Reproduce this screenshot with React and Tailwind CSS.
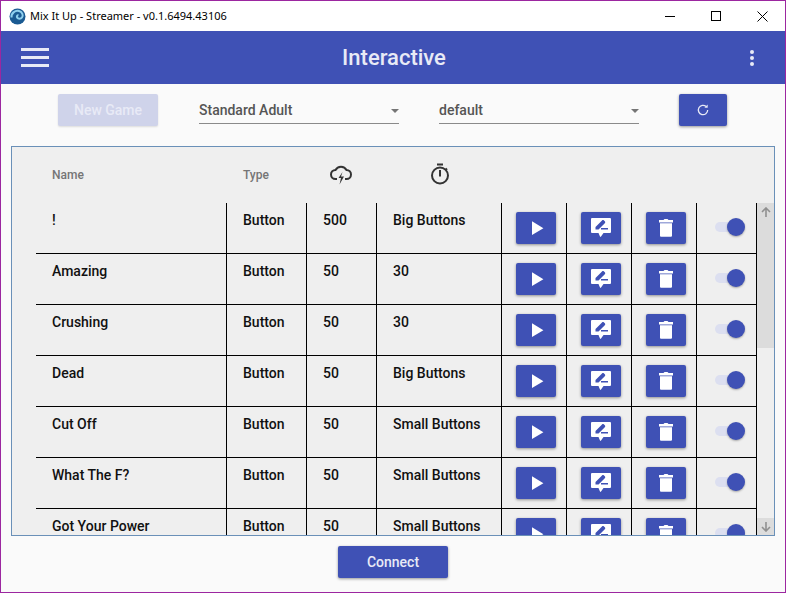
import React from "react";

const rows = [
  ["!", "500", "Big Buttons"],
  ["Amazing", "50", "30"],
  ["Crushing", "50", "30"],
  ["Dead", "50", "Big Buttons"],
  ["Cut Off", "50", "Small Buttons"],
  ["What The F?", "50", "Small Buttons"],
  ["Got Your Power", "50", "Small Buttons"],
];

const PlayIcon = () => (
  <svg width="24" height="24" viewBox="0 0 24 24" fill="white"><path d="M8 5.300v13.700l11.400-6.850z" /></svg>
);
const EditIcon = () => (
  <svg width="24" height="24" viewBox="0 0 24 24">
    <path fill="white" d="M3 2h18a1 1 0 0 1 1 1v13a1 1 0 0 1-1 1h-6.500l-2.500 3.500a.6.6 0 0 1-1 0L9.500 17H3a1 1 0 0 1-1-1V3a1 1 0 0 1 1-1z" />
    <path fill="#3f51b5" d="M6.500 13.500v-2.500l6.500-6.500c.6-.6 1.400-.6 2 0l.8.8c.6.6.6 1.400 0 2l-6.300 6.200zM12 12h7v1.600h-7z" />
  </svg>
);
const TrashIcon = () => (
  <svg width="24" height="24" viewBox="0 0 24 24" fill="white"><path d="M6 7.300h12v12.400a1 1 0 0 1-1 1H7a1 1 0 0 1-1-1zM5 4h4.500l1-1h3l1 1H19v2.500H5z" /></svg>
);

const Btn = ({ children }) => (
  <div className="w-[65px] h-[50px] shrink-0 border-r border-black flex pl-[14px] pt-[9px]">
    <div className="w-[40px] h-[32px] rounded-[2px] bg-[#3f51b5] shadow-[0_1px_3px_rgba(0,0,0,0.4)] flex items-center justify-center">{children}</div>
  </div>
);

const Row = ({ r }) => (
  <div className="h-[51px] flex border-b border-black shrink-0 text-[14px] font-medium text-[#111] leading-[16px]">
    <div className="w-[191px] shrink-0 h-[50px] border-r border-black pl-[16px] pt-[9px]">{r[0]}</div>
    <div className="w-[80px] shrink-0 h-[50px] border-r border-black pl-[16px] pt-[9px]">Button</div>
    <div className="w-[70px] shrink-0 h-[50px] border-r border-black pl-[16px] pt-[9px]">{r[1]}</div>
    <div className="w-[125px] shrink-0 h-[50px] border-r border-black pl-[16px] pt-[9px]">{r[2]}</div>
    <Btn><PlayIcon /></Btn>
    <Btn><EditIcon /></Btn>
    <Btn><TrashIcon /></Btn>
    <div className="flex-1 h-[50px] border-r border-black flex pl-[18px] pt-[15px]">
      <div className="w-[31px] h-[18px] flex items-center relative">
        <div className="w-[25px] h-[10px] rounded-full bg-[#dcdff0]" />
        <div className="absolute left-[12px] top-0 w-[18px] h-[18px] rounded-full bg-[#3f51b5] shadow-[0_1px_2px_rgba(0,0,0,0.3)]" />
      </div>
    </div>
  </div>
);

export default function App() {
  return (
    <div className="w-[786px] h-[593px] border border-[#9c27a0] bg-[#fafafa] flex flex-col overflow-hidden" style={{ fontFamily: "Roboto, sans-serif" }}>
      <div className="h-[30px] bg-white flex items-center shrink-0">
        <svg className="ml-[8px]" width="17" height="17" viewBox="0 0 17 17">
          <circle cx="8.500" cy="8.500" r="8" fill="#1a5a92" />
          <path d="M2.500 9.500c-.5-4 3.500-7.500 7.500-6.500 3.500 1 4.500 4.500 3 6.500-1.200 1.600-3.800 1.600-4.800.2-.8-1.100 0-2.600 1.300-2.400" fill="none" stroke="#8fd0ee" strokeWidth="2" />
        </svg>
        <span className="ml-[4px] text-[11px] text-black" style={{ fontFamily: "'Noto Sans', sans-serif" }}>Mix It Up - Streamer - v0.1.6494.43106</span>
        <div className="ml-auto flex items-center">
          <div className="w-[46px] h-[30px] flex items-center justify-center"><div className="w-[10px] h-px bg-black" /></div>
          <div className="w-[46px] h-[30px] flex items-center justify-center"><div className="w-[10px] h-[10px] border border-black" /></div>
          <div className="w-[46px] h-[30px] flex items-center justify-center">
            <svg width="11" height="11" viewBox="0 0 11 11"><path d="M.5.500l10 10M10.500.500l-10 10" stroke="black" strokeWidth="1" /></svg>
          </div>
        </div>
      </div>

      <div className="h-[53px] bg-[#3f51b5] flex items-center shrink-0">
        <div className="ml-[20px] w-[28px] flex flex-col gap-[5px]">
          <div className="h-[3px] bg-[#e8eaf6]" />
          <div className="h-[3px] bg-[#e8eaf6]" />
          <div className="h-[3px] bg-[#e8eaf6]" />
        </div>
        <div className="flex-1 text-center text-[22px] font-medium text-[#e8eaf6] pr-[11px]">Interactive</div>
        <div className="mr-[31px] flex flex-col gap-[2px]">
          <div className="w-[4px] h-[4px] rounded-full bg-[#e8eaf6]" />
          <div className="w-[4px] h-[4px] rounded-full bg-[#e8eaf6]" />
          <div className="w-[4px] h-[4px] rounded-full bg-[#e8eaf6]" />
        </div>
      </div>

      <div className="h-[62px] flex items-start pt-[10px] shrink-0">
        <div className="ml-[57px] w-[100px] h-[32px] rounded-[2px] bg-[#cfd3ea] shadow-[0_1px_2px_rgba(0,0,0,0.12)] flex items-center justify-center text-[14px] font-medium text-[#e8eaf6]">New Game</div>
        <div className="ml-[41px] w-[200px] h-[30px] border-b border-[#8a8a8a] flex items-center justify-between text-[14px] font-medium text-[#555] pt-[4px]">
          <span>Standard Adult</span>
          <span className="w-0 h-0 border-x-[4px] border-x-transparent border-t-[4px] border-t-[#757575]" />
        </div>
        <div className="ml-[40px] w-[200px] h-[30px] border-b border-[#8a8a8a] flex items-center justify-between text-[14px] font-medium text-[#555] pt-[4px]">
          <span>default</span>
          <span className="w-0 h-0 border-x-[4px] border-x-transparent border-t-[4px] border-t-[#757575]" />
        </div>
        <div className="ml-[40px] w-[48px] h-[32px] rounded-[2px] bg-[#3f51b5] shadow-[0_1px_3px_rgba(0,0,0,0.4)] flex items-center justify-center">
          <svg width="14" height="14" viewBox="0 0 24 24" fill="none" stroke="#e8eaf6" strokeWidth="2.200"><path d="M20 12a8 8 0 1 1-2.600-5.900" /><path d="M20 2.500v5.500h-5.500z" fill="#e8eaf6" stroke="none" /></svg>
        </div>
      </div>

      <div className="ml-[10px] w-[764px] h-[390px] border border-[#6a90b8] bg-[#efefef] shrink-0 overflow-hidden flex flex-col">
        <div className="h-[56px] shrink-0 flex items-center text-[12px] font-medium text-[#757575]">
          <div className="ml-[40px] w-[191px]">Name</div>
          <div className="w-[87px]">Type</div>
          <svg width="24" height="24" viewBox="0 0 24 24" fill="none" stroke="#333" strokeWidth="2">
            <path d="M7 16H5.500A4.500 4.500 0 0 1 5.500 7A6.200 6.200 0 0 1 16.500 7A4.500 4.500 0 0 1 16.500 16H15" />
            <path d="M12.500 9l-4 6h2.500l-1.500 6.500 4.500-8h-3z" fill="#333" stroke="none" />
          </svg>
          <svg className="ml-[75px]" width="22" height="24" viewBox="0 0 22 24" fill="none" stroke="#333" strokeWidth="2">
            <circle cx="11" cy="12.500" r="8" />
            <path d="M11 7v6.500M8 1.500h6M16.500 5.500l1.500 1.500" />
          </svg>
        </div>
        <div className="flex-1 flex min-h-0 overflow-hidden">
          <div className="w-[24px] shrink-0" />
          <div className="flex-1 flex flex-col min-w-0">
            {rows.map((r) => <Row key={r[0]} r={r} />)}
          </div>
          <div className="w-[17px] shrink-0 relative bg-[#efefef]">
            <div className="h-[145px] bg-[#dcdcdc]" />
            <div className="absolute left-0 top-0 w-full h-[17px] flex items-center justify-center">
              <svg width="10" height="10" viewBox="0 0 10 10" fill="none" stroke="#909090" strokeWidth="1.600"><path d="M1 5l4-4 4 4M5 1v9" /></svg>
            </div>
            <div className="absolute left-0 bottom-0 w-full h-[17px] bg-[#dcdcdc] flex items-center justify-center">
              <svg width="10" height="10" viewBox="0 0 10 10" fill="none" stroke="#909090" strokeWidth="1.600"><path d="M1 5l4 4 4-4M5 9V0" /></svg>
            </div>
          </div>
        </div>
      </div>

      <div className="flex-1 flex justify-center pt-[10px]">
        <div className="w-[110px] h-[32px] rounded-[2px] bg-[#3f51b5] shadow-[0_1px_3px_rgba(0,0,0,0.4)] flex items-center justify-center text-[14px] font-medium text-[#e8eaf6]">Connect</div>
      </div>
    </div>
  );
}
